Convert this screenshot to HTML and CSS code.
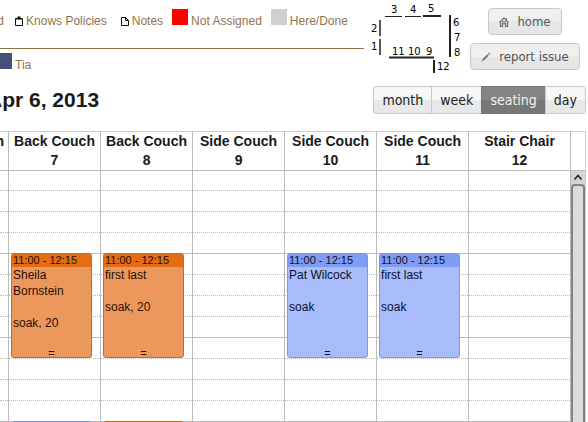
FILE: index.html
```
<!DOCTYPE html>
<html lang="en">
<head>
    <meta charset="UTF-8">
    <title>Seating</title>
    <link rel="stylesheet" href="styles.css">
</head>

<body>
    <!-- legend, seat map and page buttons -->
    <div class="top">
        <div class="legends">
            <ul class="legend statuses">
                <li>Paid</li>
                <li>
                    <svg class="icon" viewBox="0 0 8 10" width="8" height="10">
                        <path d="M0.5 2.5h7v7h-7z" fill="none" stroke="#111"/>
                        <path d="M1 2h6v1.500h-6zM2.500 0.500h3V2h-3z" fill="#111"/>
                    </svg>
                    Knows Policies
                </li>
                <li>
                    <svg class="icon" viewBox="0 0 8 10" width="8" height="10">
                        <path d="M0.5 1.500h4l3 3v5h-7z" fill="none" stroke="#111"/>
                        <path d="M4.500 1.500v3h3" fill="none" stroke="#111"/>
                    </svg>
                    Notes
                </li>
                <li class="colored"><span class="swatch unassigned"></span>Not Assigned</li>
                <li class="colored"><span class="swatch done"></span>Here/Done</li>
            </ul>
            <ul class="legend staff">
                <li><span class="swatch tia"></span>Tia</li>
            </ul>
        </div>

        <svg class="seat-map" viewBox="0 0 100 76" width="100" height="76">
            <g stroke="#222" stroke-width="1">
                <path d="M19 16.500h17M39 16.500h16"/>
                <path d="M57 16h18" stroke-width="2"/>
                <path d="M14 20v16M14 39v16" stroke-width="1.500"/>
                <path d="M84 15v42" stroke-width="2"/>
                <path d="M23 57.500h45" stroke-width="2"/>
                <path d="M68 60v13" stroke-width="2"/>
            </g>
            <g class="seat">
                <text x="25" y="13">3</text>
                <text x="44" y="13">4</text>
                <text x="62" y="12">5</text>
                <text x="5" y="32">2</text>
                <text x="5" y="50">1</text>
                <text x="87" y="26">6</text>
                <text x="88" y="41">7</text>
                <text x="88" y="56">8</text>
                <text x="26" y="55">11</text>
                <text x="42" y="55">10</text>
                <text x="60" y="55">9</text>
                <text x="71" y="70">12</text>
            </g>
        </svg>

        <div class="actions">
            <button type="button" class="btn home">
                <svg viewBox="0 0 10 10" width="10" height="10">
                    <path d="M0.500 5.500L5 1l4.500 4.500M1.500 5v4.500h2v-3h3v3h2V5" fill="none" stroke="#777" stroke-width="1.300"/>
                    <path d="M3 4.500h4M7.500 1v2" stroke="#777"/>
                </svg>
                home
            </button>
            <button type="button" class="btn report">
                <svg viewBox="0 0 10 10" width="10" height="10">
                    <path d="M2 8l5-5" stroke="#777" stroke-width="2"/>
                    <path d="M8 0.500l1.500 1.500-1 1L7 1.500zM0.500 9.500l0.500-2 1.500 1.500z" fill="#777"/>
                </svg>
                report issue
            </button>
        </div>
    </div>

    <!-- date and view switch -->
    <div class="toolbar">
        <h2>Apr 6, 2013</h2>
        <div class="views">
            <button type="button">month</button>
            <button type="button">week</button>
            <button type="button" class="active">seating</button>
            <button type="button">day</button>
        </div>
    </div>

    <!-- seats -->
    <table class="calendar">
        <colgroup>
            <col class="col-first">
            <col class="col-seat" span="5">
            <col>
            <col class="col-scroll">
        </colgroup>
        <thead>
            <tr>
                <th><div class="cut">Back Couch</div></th>
                <th>Back Couch<br>7</th>
                <th>Back Couch<br>8</th>
                <th>Side Couch<br>9</th>
                <th>Side Couch<br>10</th>
                <th>Side Couch<br>11</th>
                <th>Stair Chair<br>12</th>
                <th></th>
            </tr>
        </thead>
        <tbody>
            <tr class="hour first">
                <td></td><td></td><td></td><td></td><td></td><td></td><td></td>
                <td class="scroll" rowspan="13">
                    <div class="scrollbar">
                        <svg class="arrow" viewBox="0 0 15 12" width="15" height="12">
                            <path d="M3.500 8.500l3.500-4 3.500 4" fill="none" stroke="#222" stroke-width="1.500"/>
                        </svg>
                        <div class="thumb"></div>
                    </div>
                </td>
            </tr>
            <tr><td></td><td></td><td></td><td></td><td></td><td></td><td></td></tr>
            <tr><td></td><td></td><td></td><td></td><td></td><td></td><td></td></tr>
            <tr><td></td><td></td><td></td><td></td><td></td><td></td><td></td></tr>
            <tr class="hour">
                <td></td>
                <td>
                    <div class="event orange">
                        <div class="time">11:00 - 12:15</div>
                        <div class="title">Sheila Bornstein<br><br>soak, 20</div>
                        <div class="resize">=</div>
                    </div>
                </td>
                <td>
                    <div class="event orange">
                        <div class="time">11:00 - 12:15</div>
                        <div class="title">first last<br><br>soak, 20</div>
                        <div class="resize">=</div>
                    </div>
                </td>
                <td></td>
                <td>
                    <div class="event blue">
                        <div class="time">11:00 - 12:15</div>
                        <div class="title">Pat Wilcock<br><br>soak</div>
                        <div class="resize">=</div>
                    </div>
                </td>
                <td>
                    <div class="event blue">
                        <div class="time">11:00 - 12:15</div>
                        <div class="title">first last<br><br>soak</div>
                        <div class="resize">=</div>
                    </div>
                </td>
                <td></td>
            </tr>
            <tr><td></td><td></td><td></td><td></td><td></td><td></td><td></td></tr>
            <tr><td></td><td></td><td></td><td></td><td></td><td></td><td></td></tr>
            <tr><td></td><td></td><td></td><td></td><td></td><td></td><td></td></tr>
            <tr class="hour"><td></td><td></td><td></td><td></td><td></td><td></td><td></td></tr>
            <tr><td></td><td></td><td></td><td></td><td></td><td></td><td></td></tr>
            <tr><td></td><td></td><td></td><td></td><td></td><td></td><td></td></tr>
            <tr><td></td><td></td><td></td><td></td><td></td><td></td><td></td></tr>
            <tr class="hour">
                <td></td>
                <td><div class="event blue"></div></td>
                <td><div class="event orange"></div></td>
                <td></td><td></td><td></td><td></td>
            </tr>
        </tbody>
    </table>
</body>
</html>
```
FILE: styles.css
```
* {
    box-sizing: border-box;
}

body {
    margin: 0;
    height: 100vh;
    overflow: hidden;
    background: #fff;
    color: #1a1a1a;
    font-family: "Liberation Sans", Arial, sans-serif;
    font-size: 12px;
}

/* top area */
.top {
    display: flex;
    align-items: flex-start;
    height: 80px;
    padding-right: 8px;
}

.legends {
    flex: 1;
    min-width: 0;
}

.legend {
    display: flex;
    margin: 0;
    padding: 0;
    list-style: none;
    color: #8f7350;
    white-space: nowrap;
}

.legend li {
    display: flex;
    align-items: flex-end;
    gap: 3px;
    height: 18px;
    line-height: 12px;
}

.legend .icon {
    margin-bottom: 1px;
}

.statuses {
    height: 49px;
    padding-top: 9px;
    border-bottom: 1px solid #8c7440;
    align-items: flex-start;
    margin-right: 2px;
}

.statuses li {
    margin-right: 14px;
}

.statuses li:first-child {
    margin: 0 11px 0 -20px;
}

.statuses li:nth-child(3),
.statuses li.colored {
    margin-right: 9px;
}

.staff {
    padding-top: 4px;
}

.staff li {
    margin-left: -4px;
}

.swatch {
    width: 16px;
    height: 16px;
    align-self: flex-start;
}

.unassigned {
    background: #fe0000;
}

.done {
    background: #d0d0d0;
}

.tia {
    background: #44527a;
}

.seat-map {
    flex: none;
}

.seat {
    font-family: "DejaVu Sans", sans-serif;
    font-size: 10px;
    fill: #000;
}

/* buttons */
button {
    margin: 0;
    cursor: pointer;
    font-family: "DejaVu Sans Condensed", "DejaVu Sans", sans-serif;
    border: 1px solid #c8c8c8;
    background: linear-gradient(#f7f7f7 50%, #e8e8e8 50%);
}

.actions {
    display: flex;
    flex-direction: column;
    align-items: center;
    gap: 8px;
    width: 110px;
    margin: 8px 0 0 4px;
}

.btn {
    display: flex;
    align-items: center;
    justify-content: center;
    gap: 8px;
    height: 27px;
    padding: 0 9px;
    border-radius: 4px;
    background: linear-gradient(#efefef 50%, #e6e6e6 50%);
    color: #555;
    font-size: 13px;
    white-space: nowrap;
}

.home {
    width: 74px;
}

.report {
    width: 110px;
}

/* toolbar */
.toolbar {
    display: flex;
    justify-content: space-between;
    height: 51px;
    padding: 6px 2px 0 0;
}

h2 {
    margin: 0 0 0 -13px;
    font-size: 21px;
    line-height: 28px;
}

.views {
    display: flex;
    height: 28px;
}

.views button {
    padding: 0 8px;
    border-right: 0;
    color: #222;
    font-size: 14px;
}

.views button:first-child {
    border-radius: 4px 0 0 4px;
}

.views button:last-child {
    border-right: 1px solid #c8c8c8;
    border-radius: 0 4px 4px 0;
}

.views .active {
    border-color: #777;
    background: linear-gradient(#858585 50%, #777 50%);
    color: #f2f2f2;
}

/* calendar */
.calendar {
    width: calc(100% - 2px);
    table-layout: fixed;
    border-spacing: 0;
    border-right: 1px solid #ccc;
}

.col-first {
    width: 8px;
}

.col-seat {
    width: 15.73%;
}

.col-scroll {
    width: 15px;
}

th,
td {
    padding: 0;
    border-left: 1px solid #bbb;
}

th {
    height: 39px;
    border-top: 1px solid #ccc;
    font-size: 14px;
    line-height: 19px;
    white-space: nowrap;
}

th:first-child,
td:first-child {
    border-left: 0;
}

.cut {
    display: flex;
    justify-content: flex-end;
    height: 38px;
    padding-right: 4px;
}

td {
    position: relative;
    height: 21px;
    border-top: 1px dotted #bbb;
}

.hour td {
    border-top: 1px solid #bbb;
}

.first td {
    height: 20px;
}

/* events */
.event {
    position: absolute;
    z-index: 1;
    top: -1px;
    left: 2px;
    right: 8px;
    height: 105px;
    border: 1px solid;
    border-radius: 3px;
    overflow: hidden;
    line-height: 16px;
}

.time {
    padding-left: 1px;
    font-size: 11px;
    line-height: 13px;
}

.title {
    padding-left: 1px;
}

.resize {
    position: absolute;
    bottom: 0;
    width: 100%;
    text-align: center;
    font-size: 11px;
    line-height: 8px;
}

.event.orange {
    border-color: #c96a1e;
    background: #ec985c;
    color: #2a1005;
}

.orange .time {
    background: #e46c14;
}

.event.blue {
    border-color: #7f97e0;
    background: #a8bbfa;
    color: #0c1030;
}

.blue .time {
    background: #809cf2;
}

/* scrollbar */
.scroll {
    vertical-align: top;
}

.scrollbar {
    position: absolute;
    inset: 0;
    display: flex;
    flex-direction: column;
    background: #d6d3d0;
}

.arrow {
    display: block;
    flex: none;
}

.thumb {
    flex: 1;
    margin-top: 1px;
    border: 2px solid #858280;
    border-bottom: 0;
    border-radius: 4px 4px 0 0;
    background: #dedbd8;
}
```
